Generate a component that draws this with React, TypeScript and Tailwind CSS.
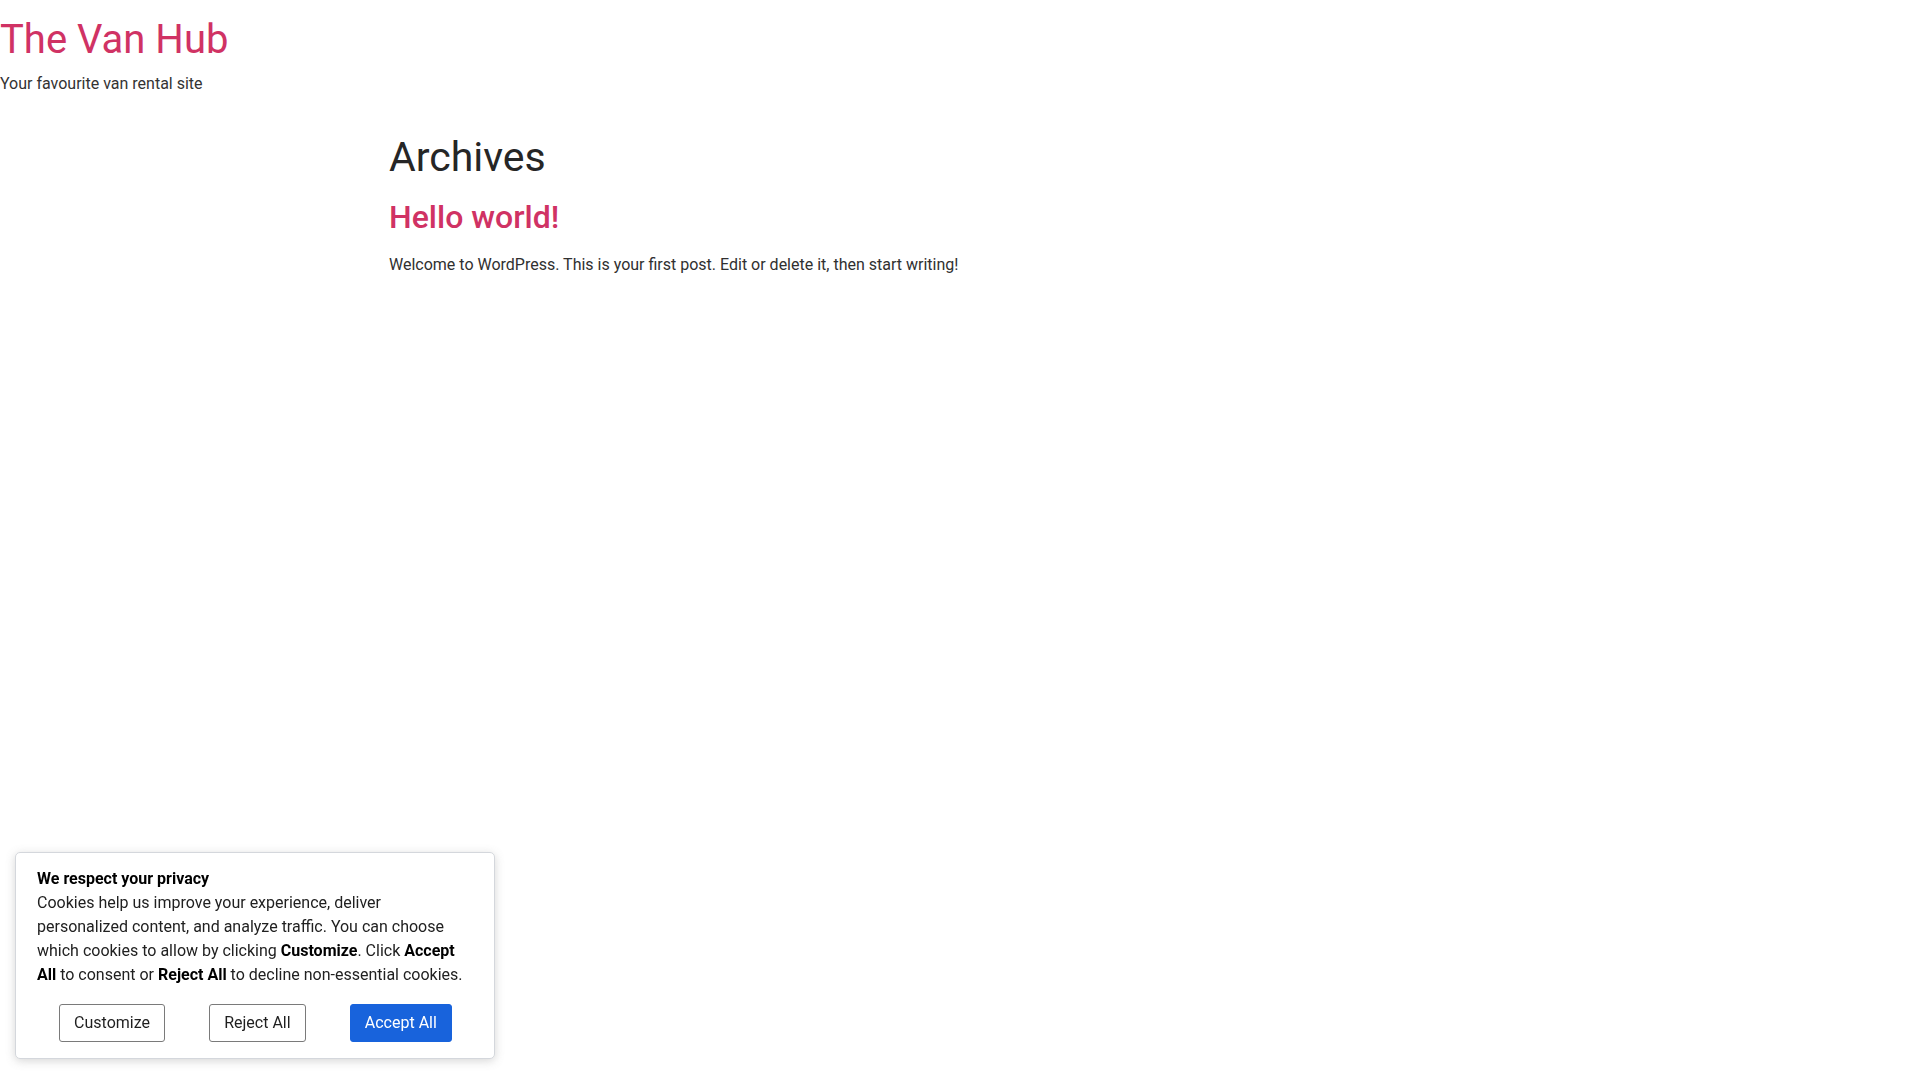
export default function App() {
  return (
    <div className="relative min-h-[1080px] bg-white text-[#303030] font-['Roboto','Liberation_Sans',sans-serif]">
      {/* Site header */}
      <header className="pt-[16px]">
        <a href="#" className="block text-[40px] leading-[48px] text-[#d03264]">
          The Van Hub
        </a>
        <p className="mt-[8px] text-[16px] leading-[24px] text-[#333]">Your favourite van rental site</p>
      </header>

      {/* Archive list */}
      <main className="mx-auto mt-[36px] w-[1142px]">
        <h1 className="text-[41px] leading-[50px] text-[#262626]">Archives</h1>
        <article className="mt-[15px]">
          <h2 className="text-[32px] leading-[40px] font-medium text-[#d03264]">
            <a href="#">Hello world!</a>
          </h2>
          <p className="mt-[16px] text-[16px] leading-[24px]">
            Welcome to WordPress. This is your first post. Edit or delete it, then start writing!
          </p>
        </article>
      </main>

      {/* Cookie consent banner */}
      <div className="fixed bottom-[21px] left-[15px] w-[480px] rounded-[5px] border border-[#d4d7dc] bg-white pl-[21px] pr-[20px] pt-[14px] pb-[16px] text-[16px] leading-[24px] text-[#212121] shadow-[0_2px_10px_rgba(120,120,120,0.3)]">
        <p className="font-bold text-black">We respect your privacy</p>
        <p>
          Cookies help us improve your experience, deliver personalized content, and analyze traffic. You can choose
          which cookies to allow by clicking <b className="text-black">Customize</b>. Click{" "}
          <b className="text-black">Accept All</b> to consent or <b className="text-black">Reject All</b> to decline
          non-essential cookies.
        </p>
        <div className="mt-[17px] flex justify-around">
          <button className="rounded-[3px] border border-[#7a7a7a] bg-white px-[14px] py-[8px] text-[16px] leading-[20px] text-[#1f1f1f]">
            Customize
          </button>
          <button className="rounded-[3px] border border-[#7a7a7a] bg-white px-[14px] py-[8px] text-[16px] leading-[20px] text-[#1f1f1f]">
            Reject All
          </button>
          <button className="rounded-[3px] border border-[#1863dc] bg-[#1863dc] px-[14px] py-[8px] text-[16px] leading-[20px] text-white">
            Accept All
          </button>
        </div>
      </div>
    </div>
  );
}
